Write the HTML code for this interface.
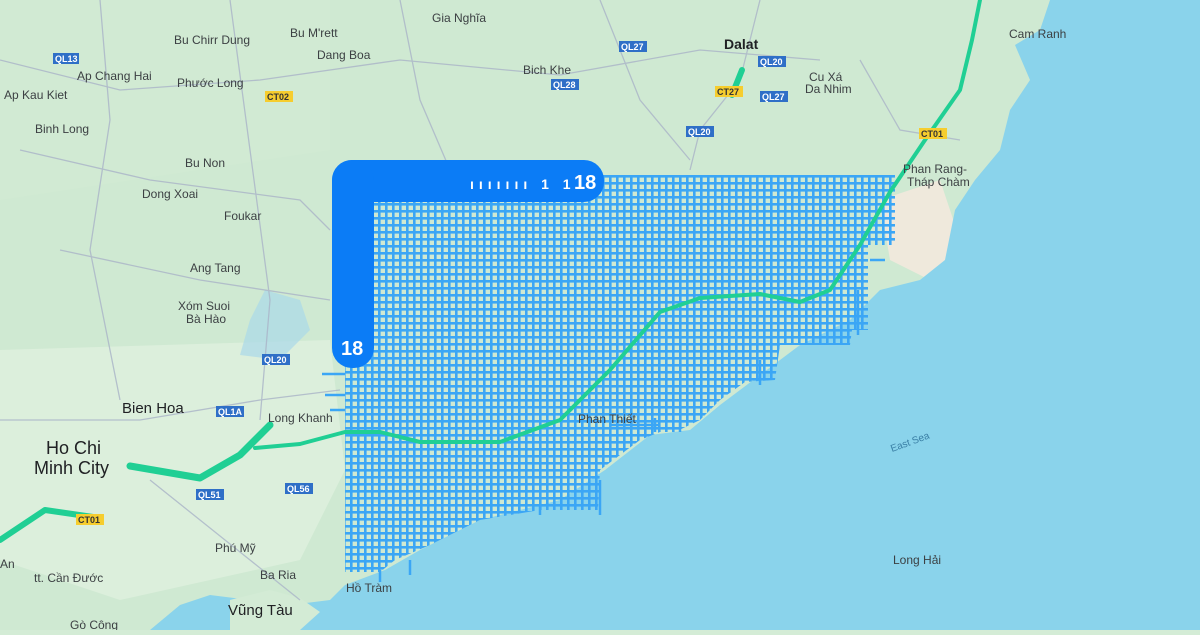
<!DOCTYPE html>
<html><head><meta charset="utf-8"><style>
html,body{margin:0;padding:0}
body{width:1200px;height:630px;overflow:hidden;background:#d4ecd6;font-family:"Liberation Sans","DejaVu Sans",sans-serif}
svg text{font-family:"Liberation Sans","DejaVu Sans",sans-serif}
</style></head><body>
<svg width="1200" height="630" viewBox="0 0 1200 630" xmlns="http://www.w3.org/2000/svg">
<defs>
<pattern id="g" width="7" height="7" patternUnits="userSpaceOnUse">
<rect x="0" y="0" width="2.6" height="7" fill="#3ba6f5"/>
<rect x="0" y="0" width="7" height="2.6" fill="#3ba6f5"/>
</pattern>
<clipPath id="c"><polygon points="345,175 895,175 895,245 868,245 868,330 852,330 850,345 780,345 775,380 745,382 720,400 700,420 675,432 660,432 640,440 600,470 598,510 540,510 480,520 430,545 395,560 380,572 345,572"/></clipPath>
</defs>
<rect width="1200" height="630" fill="#cfe9d2"/>
<path d="M0,350 L330,340 L345,470 L300,560 L120,600 L0,560Z" fill="#dcefdc"/>
<path d="M0,0 L330,0 L330,150 L0,200Z" fill="#d1ead3"/>
<path d="M880,200 L940,180 L960,240 L930,280 L890,260Z" fill="#efe9dc"/>
<path d="M1200,0 L1050,0 L1040,30 L1015,45 L1030,80 L1010,110 L1000,150 L975,180 L955,210 L945,260 L920,280 L880,290 L850,320 L800,345 L760,375 L720,405 L690,430 L650,435 L605,470 L560,500 L480,520 L420,550 L385,570 L345,585 L330,600 L290,605 L250,600 L210,595 L180,605 L150,630 L1200,630Z" fill="#8ad3eb"/>
<path d="M230,600 L270,590 L300,598 L320,612 L300,630 L230,630Z" fill="#d3ebd5"/>
<path d="M265,290 L300,300 L310,330 L280,360 L240,355 L250,320Z" fill="#aad8e8" opacity=".7"/>
<g stroke="#aab4c8" stroke-width="1.3" fill="none" opacity=".8">
<path d="M0,60 L120,90 L260,80 L400,60 L560,75 L700,50 L820,60"/>
<path d="M20,150 L150,180 L300,200 L330,230"/>
<path d="M60,250 L200,280 L330,300"/>
<path d="M100,0 L110,120 L90,250 L120,400"/>
<path d="M230,0 L250,150 L270,300 L260,420"/>
<path d="M0,420 L140,420 L260,400 L340,390"/>
<path d="M600,0 L640,100 L690,160"/>
<path d="M760,0 L740,80 L700,130 L690,170"/>
<path d="M860,60 L900,130 L960,140"/>
<path d="M150,480 L250,560 L300,600"/>
<path d="M400,0 L420,100 L450,170"/>
</g>
<rect x="340" y="170" width="560" height="410" fill="url(#g)" clip-path="url(#c)"/>
<g stroke="#3ba6f5" stroke-width="2.5">
<path d="M322,374 H345 M325,395 H345 M330,410 H345 M610,425 H660 M655,418 V432 M680,420 V432 M760,360 V385 M858,290 V335 M870,260 H885 M600,480 V515 M540,515 V505 M410,560 V575 M380,570 V582"/>
</g>
<g stroke="#20cf94" fill="none" stroke-linecap="round" stroke-linejoin="round">
<path d="M130,466 L200,478 L240,455 L270,425" stroke-width="7"/>
<path d="M255,448 L300,444 L345,432 L380,432 L420,442 L500,442 L560,420 L610,370 L660,312 L700,298 L760,294 L800,302 L830,290 L860,245 L890,192 L925,140 L960,90 L972,40 L980,0" stroke-width="4"/>
<path d="M0,540 L45,510 L100,518" stroke-width="6"/>
<path d="M742,70 L732,95" stroke-width="6"/>
</g>
<g fill="#0b7cf6">
<rect x="332" y="160" width="272" height="42" rx="20"/>
<rect x="332" y="160" width="42" height="208" rx="20"/>
</g>
<g fill="#fff" font-weight="bold" font-size="20">
<text x="574" y="189">18</text>
<text x="341" y="355">18</text>
<text x="470" y="189" font-size="14" letter-spacing="5">ııııııı 1 1</text>
</g>
<g font-size="9" font-weight="bold">
<g fill="#2f6fc7"><rect x="53" y="53" width="26" height="11"/><rect x="619" y="41" width="28" height="11"/><rect x="758" y="56" width="28" height="11"/><rect x="760" y="91" width="28" height="11"/><rect x="551" y="79" width="28" height="11"/><rect x="686" y="126" width="28" height="11"/><rect x="262" y="354" width="28" height="11"/><rect x="216" y="406" width="28" height="11"/><rect x="196" y="489" width="28" height="11"/><rect x="285" y="483" width="28" height="11"/></g>
<g fill="#f6cd2e"><rect x="265" y="91" width="28" height="11"/><rect x="715" y="86" width="28" height="11"/><rect x="919" y="128" width="28" height="11"/><rect x="76" y="514" width="28" height="11"/></g>
<g fill="#fff"><text x="55" y="62">QL13</text><text x="621" y="50">QL27</text><text x="760" y="65">QL20</text><text x="762" y="100">QL27</text><text x="553" y="88">QL28</text><text x="688" y="135">QL20</text><text x="264" y="363">QL20</text><text x="218" y="415">QL1A</text><text x="198" y="498">QL51</text><text x="287" y="492">QL56</text></g>
<g fill="#333"><text x="267" y="100">CT02</text><text x="717" y="95">CT27</text><text x="921" y="137">CT01</text><text x="78" y="523">CT01</text></g>
</g>
<g fill="#3c4043" font-size="12">
<text x="432" y="22">Gia Nghĩa</text>
<text x="174" y="44">Bu Chirr Dung</text>
<text x="290" y="37">Bu M'rett</text>
<text x="317" y="59">Dang Boa</text>
<text x="77" y="80">Ap Chang Hai</text>
<text x="177" y="87">Phước Long</text>
<text x="523" y="74">Bich Khe</text>
<text x="4" y="99">Ap Kau Kiet</text>
<text x="35" y="133">Binh Long</text>
<text x="185" y="167">Bu Non</text>
<text x="142" y="198">Dong Xoai</text>
<text x="224" y="220">Foukar</text>
<text x="190" y="272">Ang Tang</text>
<text x="178" y="310">Xóm Suoi</text>
<text x="186" y="323">Bà Hào</text>
<text x="809" y="81">Cu Xá</text>
<text x="805" y="93">Da Nhim</text>
<text x="1009" y="38">Cam Ranh</text>
<text x="903" y="173">Phan Rang-</text>
<text x="907" y="186">Tháp Chàm</text>
<text x="268" y="422">Long Khanh</text>
<text x="215" y="552">Phú Mỹ</text>
<text x="260" y="579">Ba Ria</text>
<text x="346" y="592">Hồ Tràm</text>
<text x="893" y="564">Long Hải</text>
<text x="34" y="582">tt. Cần Đước</text>
<text x="0" y="568">An</text>
<text x="70" y="629">Gò Công</text>
<text x="578" y="423">Phan Thiết</text>
<text x="892" y="452" font-size="10" fill="#3a7fa5" transform="rotate(-20 892 452)">East Sea</text>
</g>
<g fill="#202124" font-size="14" font-weight="bold">
<text x="724" y="49">Dalat</text>
<text x="122" y="413" font-weight="normal" font-size="15">Bien Hoa</text>
<text x="46" y="454" font-size="18" font-weight="normal">Ho Chi</text>
<text x="34" y="474" font-size="18" font-weight="normal">Minh City</text>
<text x="228" y="615" font-size="15" font-weight="normal">Vũng Tàu</text>
</g>
</svg>
</body></html>
